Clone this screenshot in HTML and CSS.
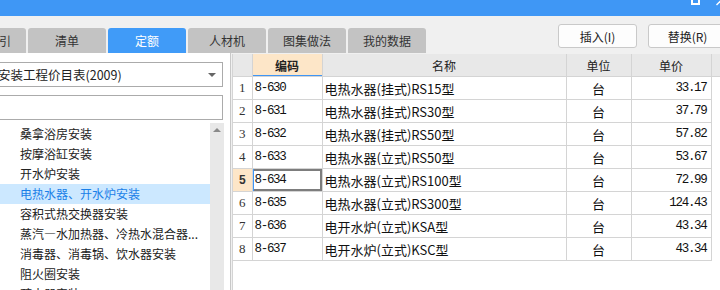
FILE: index.html
```html
<!DOCTYPE html>
<html lang="zh-CN">
<head>
    <meta charset="UTF-8">
    <title>定额</title>
    <link rel="stylesheet" href="styles.css">
</head>
<body>
    <div class="titlebar">
        <span class="max-icon"></span>
        <svg class="close-icon" width="8" height="16" viewBox="0 0 8 16">
            <line x1="4.5" y1="5" x2="8.5" y2="1" stroke="#fff" stroke-width="1.5"/>
        </svg>
    </div>

    <div class="toolbar">
        <div class="tabs">
            <div class="tab">清单指引</div>
            <div class="tab">清单</div>
            <div class="tab active">定额</div>
            <div class="tab">人材机</div>
            <div class="tab">图集做法</div>
            <div class="tab">我的数据</div>
        </div>
        <div class="actions">
            <button class="btn">插入(I)</button>
            <button class="btn">替换(R)</button>
        </div>
    </div>

    <div class="main">
        <div class="side">
            <div class="select">
                <span>安装工程价目表(2009)</span>
                <span class="caret"></span>
            </div>
            <div class="search"></div>
            <div class="tree">
                <ul class="tree-list">
                    <li class="tree-item">桑拿浴房安装</li>
                    <li class="tree-item">按摩浴缸安装</li>
                    <li class="tree-item">开水炉安装</li>
                    <li class="tree-item selected">电热水器、开水炉安装</li>
                    <li class="tree-item">容积式热交换器安装</li>
                    <li class="tree-item">蒸汽—水加热器、冷热水混合器...</li>
                    <li class="tree-item">消毒器、消毒锅、饮水器安装</li>
                    <li class="tree-item">阻火圈安装</li>
                    <li class="tree-item">疏水器安装</li>
                </ul>
                <div class="scrollbar"><span class="arrow-up"></span></div>
            </div>
        </div>

        <div class="grid">
            <table class="quota">
                <colgroup>
                    <col class="c-no">
                    <col class="c-code">
                    <col class="c-name">
                    <col class="c-unit">
                    <col class="c-price">
                    <col>
                </colgroup>
                <thead>
                    <tr>
                        <th></th>
                        <th class="sorted">编码</th>
                        <th>名称</th>
                        <th>单位</th>
                        <th>单价</th>
                        <th class="filler"></th>
                    </tr>
                </thead>
                <tbody>
                    <tr>
                        <td class="no">1</td>
                        <td class="code">8-630</td>
                        <td class="name">电热水器(挂式)RS15型</td>
                        <td class="unit">台</td>
                        <td class="price">33.17</td>
                        <td class="filler"></td>
                    </tr>
                    <tr>
                        <td class="no">2</td>
                        <td class="code">8-631</td>
                        <td class="name">电热水器(挂式)RS30型</td>
                        <td class="unit">台</td>
                        <td class="price">37.79</td>
                        <td class="filler"></td>
                    </tr>
                    <tr>
                        <td class="no">3</td>
                        <td class="code">8-632</td>
                        <td class="name">电热水器(挂式)RS50型</td>
                        <td class="unit">台</td>
                        <td class="price">57.82</td>
                        <td class="filler"></td>
                    </tr>
                    <tr>
                        <td class="no">4</td>
                        <td class="code">8-633</td>
                        <td class="name">电热水器(立式)RS50型</td>
                        <td class="unit">台</td>
                        <td class="price">53.67</td>
                        <td class="filler"></td>
                    </tr>
                    <tr>
                        <td class="no current-row">5</td>
                        <td class="code current">8-634</td>
                        <td class="name">电热水器(立式)RS100型</td>
                        <td class="unit">台</td>
                        <td class="price">72.99</td>
                        <td class="filler"></td>
                    </tr>
                    <tr>
                        <td class="no">6</td>
                        <td class="code">8-635</td>
                        <td class="name">电热水器(立式)RS300型</td>
                        <td class="unit">台</td>
                        <td class="price">124.43</td>
                        <td class="filler"></td>
                    </tr>
                    <tr>
                        <td class="no">7</td>
                        <td class="code">8-636</td>
                        <td class="name">电开水炉(立式)KSA型</td>
                        <td class="unit">台</td>
                        <td class="price">43.34</td>
                        <td class="filler"></td>
                    </tr>
                    <tr>
                        <td class="no">8</td>
                        <td class="code">8-637</td>
                        <td class="name">电开水炉(立式)KSC型</td>
                        <td class="unit">台</td>
                        <td class="price">43.34</td>
                        <td class="filler"></td>
                    </tr>
                </tbody>
            </table>
        </div>
    </div>
</body>
</html>
```

FILE: styles.css
```css
body {
    margin: 0;
    width: 720px;
    height: 290px;
    overflow: hidden;
    background-color: #f0f0f0;
    font-family: "Noto Sans CJK SC", sans-serif;
    font-size: 12px;
    color: #222;
}

.titlebar {
    height: 16px;
    background-color: #3f97f5;
    display: flex;
    justify-content: flex-end;
    overflow: hidden;
}

.max-icon {
    width: 5px;
    height: 5px;
    border: 2px solid #fff;
    margin-top: -4px;
    margin-right: 12px;
}

.close-icon {
    display: block;
}

.toolbar {
    height: 37px;
    display: flex;
}

.tabs {
    display: flex;
    gap: 2px;
    margin-left: -52px;
    align-self: flex-end;
}

.tab {
    width: 78px;
    height: 25px;
    line-height: 25px;
    text-align: center;
    background-color: #c3c3c3;
    color: #333;
    border-radius: 3px 3px 0 0;
    white-space: nowrap;
}

.tab.active {
    background-color: #409bf8;
    color: #fff;
}

.actions {
    display: flex;
    gap: 11px;
    margin-top: 8px;
    margin-left: auto;
    margin-right: -7px;
    align-self: flex-start;
}

.btn {
    width: 79px;
    height: 24px;
    padding: 0;
    border: 1px solid #c9c9c9;
    border-radius: 3px;
    background-color: #fdfdfd;
    font-family: "Noto Sans CJK SC", sans-serif;
    font-size: 12px;
    color: #222;
}

.main {
    display: flex;
    height: 237px;
}

.side {
    width: 251px;
    margin-left: -20px;
    box-sizing: border-box;
    background-color: #fff;
    border-right: 1px solid #c8c8c8;
    display: flex;
    flex-direction: column;
}

.select {
    height: 25px;
    box-sizing: border-box;
    margin: 9px 7px 0 0;
    padding-left: 17px;
    border: 1px solid #ababab;
    display: flex;
    align-items: center;
    white-space: nowrap;
    font-size: 12.5px;
}

.caret {
    margin-left: auto;
    margin-right: 6px;
    border-left: 4px solid transparent;
    border-right: 4px solid transparent;
    border-top: 4px solid #666;
}

.search {
    height: 25px;
    box-sizing: border-box;
    margin: 8px 7px 0 0;
    border: 1px solid #ababab;
}

.tree {
    flex: 1;
    display: flex;
    margin-top: 3px;
    min-height: 0;
}

.tree-list {
    flex: 1;
    list-style: none;
    margin: 0;
    padding: 1px 0 0 0;
}

.tree-item {
    height: 20px;
    line-height: 20px;
    padding-left: 40px;
    white-space: nowrap;
    overflow: hidden;
}

.tree-item.selected {
    background-color: #cce8ff;
    color: #1a7fe8;
}

.scrollbar {
    width: 14px;
    margin-right: 6px;
    background-color: #e8e8e8;
    display: flex;
    justify-content: center;
}

.arrow-up {
    margin-top: 5px;
    width: 0;
    height: 0;
    border-left: 4px solid transparent;
    border-right: 4px solid transparent;
    border-bottom: 4px solid #8a8a8a;
}

.grid {
    flex: 1;
    margin: 1px 0 0 1px;
    background-color: #fff;
    border-left: 1px solid #d4d4d4;
    overflow: hidden;
}

.quota {
    width: 100%;
    border-collapse: collapse;
    table-layout: fixed;
}

.c-no { width: 19px; }
.c-code { width: 70px; }
.c-name { width: 244px; }
.c-unit { width: 65px; }
.c-price { width: 80px; }

.quota th,
.quota td {
    height: 22px;
    padding: 0;
    border: 1px solid #d4d4d4;
    white-space: nowrap;
    overflow: hidden;
}

.quota tr > :first-child {
    border-left: none;
}

.quota thead th {
    border-top: none;
    background-color: #e8e8e8;
    font-weight: normal;
    font-size: 12px;
    color: #222;
}

.quota th.sorted {
    background-color: #fde6c8;
    font-weight: bold;
    box-shadow: inset 0 -1px 0 #3f96f5;
}

.quota .filler {
    border-right: none;
}

.quota td.filler {
    border-top: none;
    border-bottom: none;
}

.no {
    text-align: center;
    font-family: "Liberation Serif", serif;
    font-size: 13px;
    color: #333;
}

.no.current-row {
    background-color: #fde6c8;
    font-family: "Liberation Sans", sans-serif;
    font-weight: bold;
    font-size: 12px;
}

.code,
.price {
    font-family: "Liberation Mono", monospace;
    font-size: 12.5px;
    letter-spacing: -1.3px;
    color: #111;
}

.code {
    padding-left: 2px !important;
}

.code.current {
    box-shadow: inset 1px 0 0 #3f96f5, inset 0 2px 0 #7d7d7d, inset 0 -2px 0 #7d7d7d, inset -2px 0 0 #7d7d7d;
}

.name {
    padding-left: 2px !important;
    font-size: 13px;
    color: #111;
}

.unit {
    text-align: center;
    font-size: 13px;
    color: #111;
}

.price {
    text-align: right;
    padding-right: 4px !important;
}
```
